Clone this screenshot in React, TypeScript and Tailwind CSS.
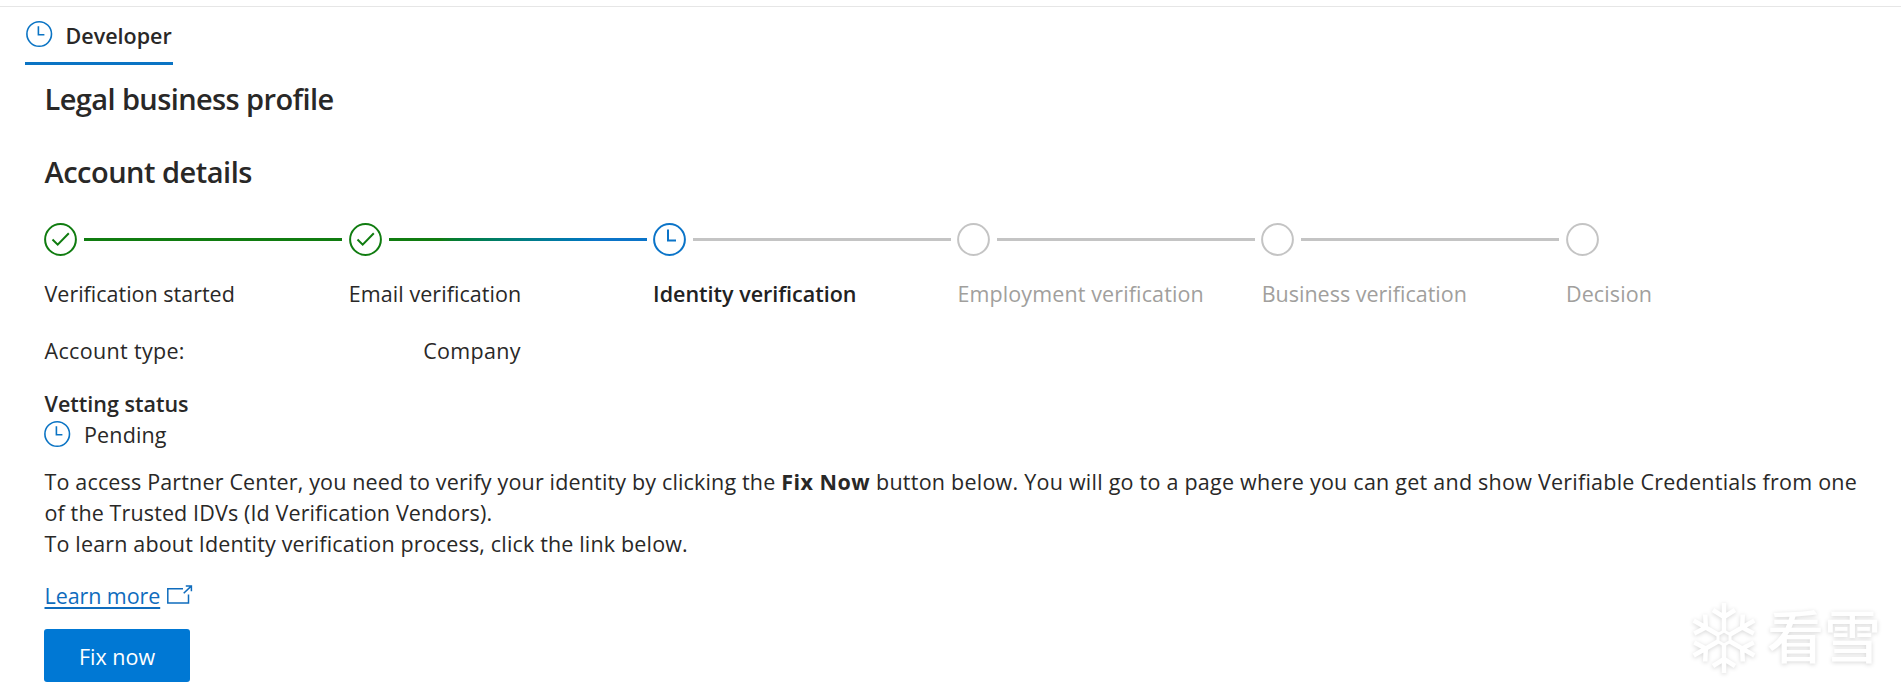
import { clsx } from 'clsx'

type StepState = 'done' | 'current' | 'todo'

const STEPS: { label: string; state: StepState; line?: string; text: string }[] = [
  { label: 'Verification started', state: 'done', line: 'bg-[#107c10]', text: 'text-[#292827]' },
  {
    label: 'Email verification',
    state: 'done',
    line: 'bg-linear-to-r from-[#107c10] from-20% to-[#0b74c8] to-80%',
    text: 'tracking-[0.06px] text-[#292827]',
  },
  { label: 'Identity verification', state: 'current', line: 'bg-[#c4c4c4]', text: 'font-semibold text-[#222]' },
  {
    label: 'Employment verification',
    state: 'todo',
    line: 'bg-[#c4c4c4]',
    text: 'tracking-[0.12px] text-[#a19f9d]',
  },
  { label: 'Business verification', state: 'todo', line: 'bg-[#c4c4c4]', text: 'text-[#a19f9d]' },
  { label: 'Decision', state: 'todo', text: 'tracking-[0.1px] text-[#a19f9d]' },
]

export default function App() {
  return (
    <div className="relative h-[700px] w-[1901px] overflow-hidden bg-white font-['Open_Sans',sans-serif] text-[21.5px] leading-[31px] text-[#292827]">
      <div className="h-[7px] border-b border-[#e6e6e6]" />

      {/* Tab */}
      <div className="ml-[25px] flex h-[58px] w-[148px] border-b-[3px] border-[#0b74c4] pt-[13px]">
        <ClockIcon size={28} />
        <span className="ml-[12.5px] font-semibold whitespace-nowrap">Developer</span>
      </div>

      <main className="pl-[44.5px]">
        <h2 className="mt-[14px] text-[29px] leading-10 font-semibold tracking-[-0.6px]">Legal business profile</h2>
        <h2 className="mt-[33px] text-[29px] leading-10 font-semibold tracking-[-0.5px]">Account details</h2>

        <ol className="mt-[31px] flex">
          {STEPS.map((step) => (
            <li key={step.label} className="w-[304.3px] shrink-0">
              <div className="-ml-[0.3px] flex h-[33px] items-center">
                <StepIcon state={step.state} />
                {step.line && <div className={clsx('ml-[7px] h-[3px] w-[258px]', step.line)} />}
              </div>
              <p className={clsx('mt-[22px] whitespace-nowrap', step.text)}>{step.label}</p>
            </li>
          ))}
        </ol>

        <div className="mt-[26px] flex tracking-[0.33px]">
          <span className="w-[378.7px]">Account type:</span>
          <span>Company</span>
        </div>

        <h3 className="mt-[22px] font-semibold">Vetting status</h3>
        <div className="-ml-[1.5px] flex">
          <ClockIcon size={28} className="mt-px" />
          <span className="ml-[13px] tracking-[0.15px]">Pending</span>
        </div>

        <p className="mt-4 tracking-[0.16px] whitespace-nowrap">
          To access Partner Center, you need to verify your identity by clicking the{' '}
          <b className="tracking-[0.5px]">Fix Now</b>{' '}
          <span className="tracking-[0.24px]">
            button below. You will go to a page where you can get and show Verifiable Credentials from one
          </span>
          <br />
          <span className="tracking-[0.12px]">of the Trusted IDVs (Id Verification Vendors).</span>
          <br />
          To learn about Identity verification process, click the link below.
        </p>

        <a href="#" className="mt-[21px] flex w-fit text-[#0f6cbd]">
          <span className="tracking-[-0.08px] underline decoration-2 underline-offset-[3px]">Learn more</span>
          <ExternalIcon />
        </a>

        <button className="mt-[18px] -ml-[0.5px] block h-[53px] w-[146px] rounded-[3px] bg-[#0078d4] pt-0.5 text-white">
          Fix now
        </button>
      </main>

      <Watermark />
    </div>
  )
}

function ClockIcon({ size, className }: { size: number; className?: string }) {
  return (
    <svg
      width={size}
      height={size}
      viewBox="0 0 28 28"
      fill="none"
      stroke="#0b74c4"
      strokeWidth="1.6"
      className={clsx('shrink-0', className)}
    >
      <circle cx="14.2" cy="14" r="12.3" />
      <path d="M13.4 6.2v8.6h6" />
    </svg>
  )
}

function StepIcon({ state }: { state: StepState }) {
  const color = { done: '#107c10', current: '#0b74c8', todo: '#c4c4c4' }[state]
  return (
    <svg width="33" height="33" viewBox="0 0 33 33" fill="none" stroke={color} strokeWidth="2" className="shrink-0">
      <circle cx="16.5" cy="16.5" r="15.4" />
      {state === 'done' && <path d="M8.5 16.5l5.2 5.2L24.8 10.3" />}
      {state === 'current' && <path d="M15 6.5v11h8" />}
    </svg>
  )
}

function ExternalIcon() {
  return (
    <svg width="26" height="20" viewBox="0 0 26 20" fill="none" stroke="#0f6cbd" strokeWidth="1.5" className="mt-[5px] ml-[6.5px]">
      <path d="M16 3.7H.8v14.2h20.7V9.5M16.7 8.3l7.5-7.2M18.8.9h5.6v5.4" />
    </svg>
  )
}

function Watermark() {
  return (
    <div className="absolute top-[601px] left-[1691px] flex text-white drop-shadow-[0_1px_2px_rgba(0,0,0,0.16)]">
      <svg width="66" height="74" viewBox="-33 -37 66 74" fill="none" stroke="#fff" strokeWidth="4.5">
        <path d="M0-7l6 3.5v7L0 7l-6-3.5v-7z" strokeWidth="3" />
        {[0, 60, 120, 180, 240, 300].map((angle) => (
          <path key={angle} d="M0-7v-28M0-21l-11-7M0-21l11-7" transform={`rotate(${angle})`} />
        ))}
      </svg>
      <span className="-mt-[5px] ml-[10px] font-['Noto_Sans_CJK_SC',sans-serif] text-[57px] leading-[74px] font-medium">
        看雪
      </span>
    </div>
  )
}
